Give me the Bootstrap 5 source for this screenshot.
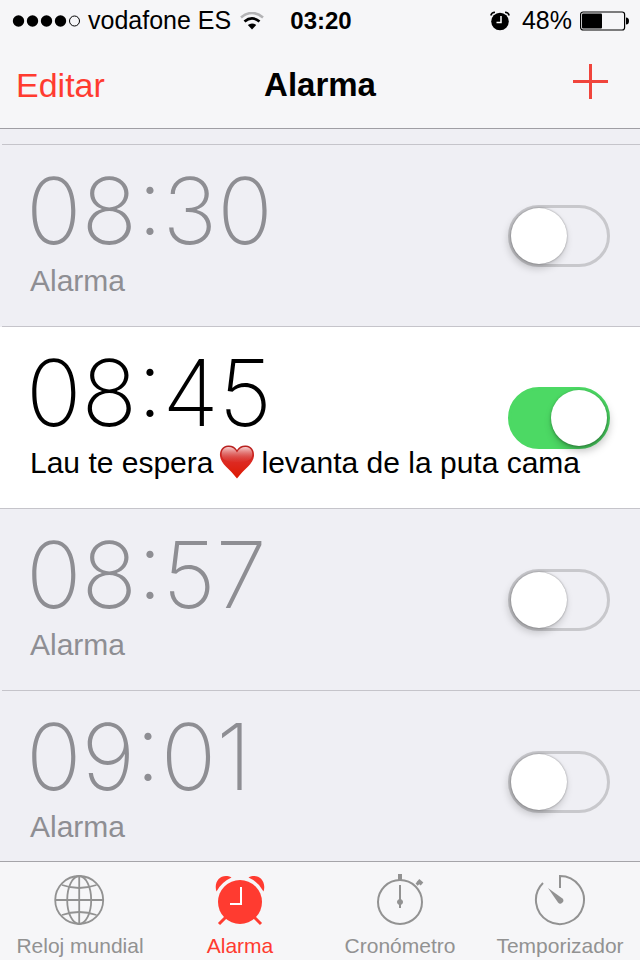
<!DOCTYPE html>
<html lang="es">
<head>
<meta charset="utf-8">
<meta name="viewport" content="width=device-width, initial-scale=1">
<title>Alarma</title>
<link href="https://cdn.jsdelivr.net/npm/bootstrap@5.3.0/dist/css/bootstrap.min.css" rel="stylesheet">
<style>
  :root { --tint: #ff3b30; --muted: #8e8e93; --line: #c5c4ca; --bar: #f6f6f8; --list: #efeff4; }
  body { font-family: "Liberation Sans", Arial, sans-serif; background: var(--list); color: #000; }
  svg { display: block; flex: none; }
  .top-bar { background: var(--bar); border-bottom: 1px solid #9f9ea4; }
  .status-line { height: 41px; padding: 0 10px 0 12px; font-size: 25px; line-height: 41px; }
  .status-line > * { flex: 1 1 0; }
  .status-line .clock { flex: none; font-size: 24px; font-weight: 700; }
  .carrier { padding-left: 7px; padding-right: 9px; }
  .title-line { height: 87px; padding: 0 16px; }
  .title-line > * { flex: 1 1 0; }
  .title-line h1 { flex: none; font-size: 33px; font-weight: 700; line-height: 87px; }
  .bar-btn { font-size: 34px; line-height: 40px; color: var(--tint); background: none; border: 0; padding: 0; }
  .add-btn { padding: 0 16px 6px 0; }
  .alarm-scroll { min-height: 0; overflow-y: auto; scrollbar-width: none; padding-top: 15px; }
  .alarm-scroll::-webkit-scrollbar { display: none; }
  .alarm-list { border-top: 1px solid var(--line); margin-left: 2px; }
  .alarm-row { padding: 24px 30px 25px 28px; border-bottom: 1px solid var(--line); color: var(--muted); position: relative; }
  .alarm-row.is-on { color: #000; background: #fff; margin-left: -2px; padding-left: 30px; }
  .alarm-time { font-family: Inter, sans-serif; font-weight: 150; font-size: 92px; line-height: 84px; margin-left: -4px; margin-bottom: 8px; }
  .alarm-name { display: block; font-size: 30px; line-height: 40px; white-space: nowrap; }
  .heart { display: inline-block; vertical-align: -6px; margin: -4px 6px 0 6px; }
  .toggle { position: absolute; right: 30px; top: 60px; appearance: none; width: 102px; height: 62px; margin: 0; border: 3px solid #c8c8cc; border-radius: 31px; }
  .toggle::before { content: ""; display: block; width: 56px; height: 56px; border-radius: 50%; background: #fff; box-shadow: 0 0 2px rgba(0,0,0,.4), -2px 4px 8px rgba(0,0,0,.22); }
  .toggle:checked { background: #4cd964; border-color: #4cd964; }
  .toggle:checked::before { margin-left: 40px; box-shadow: 0 1px 3px rgba(0,0,0,.3), 2px 5px 9px rgba(0,0,0,.25); }
  .tab-bar { background: var(--bar); border-top: 1px solid #a5a4a9; }
  .tab-link { color: #929292; font-size: 21px; line-height: 24px; padding: 10px 0 2px; text-decoration: none; white-space: nowrap; }
  .tab-link svg { margin-bottom: 8px; }
  .tab-link.current { color: var(--tint); }
</style>
<script src="https://cdn.jsdelivr.net/npm/bootstrap@5.3.0/dist/js/bootstrap.bundle.min.js"></script>
</head>
<body class="vh-100 d-flex flex-column overflow-hidden">
<header class="top-bar flex-shrink-0">
  <div class="status-line d-flex align-items-center">
    <div class="d-flex align-items-center">
      <svg width="69" height="14" viewBox="0 0 69 14"><g><circle cx="6.500" cy="7" r="5.700"/><circle cx="20.500" cy="7" r="5.700"/><circle cx="34.500" cy="7" r="5.700"/><circle cx="48.500" cy="7" r="5.700"/></g><circle cx="62.500" cy="7" r="5" fill="none" stroke="#000" stroke-width="1"/></svg>
      <span class="carrier text-nowrap">vodafone ES</span>
      <svg width="24" height="18" viewBox="0 0 24 18"><g fill="none"><path d="M1 5.500Q12-3.500 23 5.500" stroke="#b3b3b5" stroke-width="2.600"/><path d="M4.500 9.500Q12 3.300 19.500 9.500" stroke="#000" stroke-width="2.800"/></g><path d="M7.800 13Q12 9.800 16.200 13L12 17.600z"/></svg>
    </div>
    <span class="clock">03:20</span>
    <div class="d-flex align-items-center justify-content-end">
      <svg width="20" height="20" viewBox="0 0 20 20"><circle cx="10" cy="10.500" r="8.800"/><path d="M.8 4.500Q1.500 1.300 5 1.200M15 1.200Q18.500 1.300 19.200 4.500" fill="none" stroke="#000" stroke-width="1.500"/><path d="M11 5v6.500H6.500" fill="none" stroke="#fff" stroke-width="1.500"/></svg>
      <span class="ms-2 ps-1 me-2">48%</span>
      <svg width="50" height="20" viewBox="0 0 50 20"><rect x=".6" y="1" width="44" height="18" rx="2.500" fill="none" stroke="#000" stroke-width="1.200"/><rect x="2" y="2.500" width="20" height="15" rx="1"/><path d="M46 6.500q3 0 3 3.500t-3 3.500z"/></svg>
    </div>
  </div>
  <div class="title-line d-flex align-items-center">
    <div><button type="button" class="bar-btn">Editar</button></div>
    <h1 class="m-0">Alarma</h1>
    <div class="d-flex justify-content-end"><button type="button" class="bar-btn add-btn" aria-label="Añadir alarma"><svg width="35" height="35" viewBox="0 0 35 35"><path d="M17.500 0v35M0 17.500h35" stroke="#f0443c" stroke-width="3"/></svg></button></div>
  </div>
</header>
<main class="alarm-scroll flex-grow-1">
  <div class="alarm-list">
    <section class="alarm-row"><div class="alarm-time">08:30</div><label class="alarm-name" for="a1">Alarma</label><input class="toggle" type="checkbox" role="switch" id="a1"></section>
    <section class="alarm-row is-on"><div class="alarm-time">08:45</div><label class="alarm-name" for="a2">Lau te espera<svg class="heart" width="36" height="34" viewBox="0 0 36 34"><defs><linearGradient id="hg" x1="0" y1="0" x2="0" y2="1"><stop offset="0" stop-color="#b5201f"/><stop offset=".5" stop-color="#dd2a22"/><stop offset="1" stop-color="#dd1800"/></linearGradient><linearGradient id="hs" x1="0" y1="0" x2="0" y2="1"><stop offset="0" stop-color="#f9d0d0"/><stop offset="1" stop-color="#e8605c" stop-opacity=".1"/></linearGradient></defs><path d="M18 5C20 1.500 23.500.3 27 .6 32.500 1.100 35.500 5.500 35 11 34.300 19 25 24 18 33.500 11 24 1.700 19 1 11 .5 5.500 3.500 1.100 9 .6 12.500.3 16 1.500 18 5z" fill="url(#hg)"/><path d="M18 7.500C20 3.500 23.500 1.800 27 2c4.300.4 6.500 3.500 6.300 7.500-.2 4-2.300 7.500-15.300 7.500S2.900 13.500 2.700 9.500C2.500 5.500 4.700 2.400 9 2c3.500-.2 7 1.500 9 5.500z" fill="url(#hs)"/></svg>levanta de la puta cama</label><input class="toggle" type="checkbox" role="switch" id="a2" checked></section>
    <section class="alarm-row"><div class="alarm-time">08:57</div><label class="alarm-name" for="a3">Alarma</label><input class="toggle" type="checkbox" role="switch" id="a3"></section>
    <section class="alarm-row"><div class="alarm-time">09:01</div><label class="alarm-name" for="a4">Alarma</label><input class="toggle" type="checkbox" role="switch" id="a4"></section>
  </div>
</main>
<nav class="tab-bar flex-shrink-0">
  <div class="row g-0">
    <a href="#" class="tab-link col d-flex flex-column align-items-center"><svg width="52" height="54" viewBox="0 0 52 54" fill="none" stroke="#929292" stroke-width="1.800"><circle cx="25.200" cy="28" r="24"/><path d="M25.200 4v48M1 28h48"/><ellipse cx="25.200" cy="28" rx="12" ry="24"/><path d="M8 13Q25 19 42.500 13M8 43Q25 37 42.500 43"/></svg>Reloj mundial</a>
    <a href="#" class="tab-link current col d-flex flex-column align-items-center" aria-current="page"><svg width="52" height="54" viewBox="0 0 52 54" fill="#ff3b30"><circle cx="26" cy="30" r="22"/><path d="M2.500 19.500C-1 9 8 .5 17.500 5.500Q7.500 10 2.500 19.500zM49.500 19.500C53 9 44 .5 34.500 5.500Q44.500 10 49.500 19.500z"/><path d="M12 45l-7 7M40 45l7 7" stroke="#ff3b30" stroke-width="3"/><path d="M27 15v17H16" fill="none" stroke="#fff" stroke-width="2"/></svg>Alarma</a>
    <a href="#" class="tab-link col d-flex flex-column align-items-center"><svg width="52" height="54" viewBox="0 0 52 54" fill="#929292" stroke="#929292"><circle cx="26" cy="30" r="22" fill="none" stroke-width="2"/><path d="M26 2v6" stroke-width="4"/><path d="M26 13v23" stroke-width="2"/><circle cx="26" cy="30" r="2.500"/><path d="M42.500 12.500l3-2.500" stroke-width="3"/><path d="M44 8.500l4 3.500" stroke-width="4"/></svg>Cronómetro</a>
    <a href="#" class="tab-link col d-flex flex-column align-items-center"><svg width="52" height="54" viewBox="0 0 52 54" fill="none" stroke="#929292" stroke-width="2"><path d="M26 16V4a24 24 0 1 1-17 7"/><path d="M14 16l14.500 10.500a3 3 0 0 1-4.500 4z" fill="#929292" stroke="none"/></svg>Temporizador</a>
  </div>
</nav>
</body>
</html>
